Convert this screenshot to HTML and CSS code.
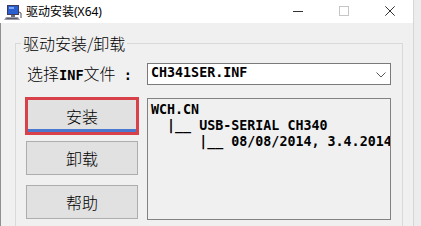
FILE: index.html
```html
<!DOCTYPE html>
<html lang="zh-CN">
<head>
<meta charset="utf-8">
<title>驱动安装(X64)</title>
<link rel="stylesheet" href="styles.css">
</head>
<body>
<div class="window">
  <div class="titlebar">
    <svg class="app-icon" width="18" height="17" viewBox="0 0 18 17">
      <rect x="3" y="1" width="12" height="10" fill="#3a3a5a"/>
      <rect x="4" y="2" width="10" height="8" fill="#2a5fd0"/>
      <rect x="5" y="3" width="5" height="2" fill="#7fa8f0"/>
      <rect x="7" y="11" width="4" height="2" fill="#6b6b80"/>
      <polygon points="2,13 14,13 16,16 0,16" fill="#9a9aa8"/>
      <polygon points="3,14 13,14 14,15 2,15" fill="#5a5a6e"/>
      <path d="M15 8 L17 9 L17 14" stroke="#4a4a60" stroke-width="1" fill="none"/>
    </svg>
    <span class="title">驱动安装(X64)</span>
    <div class="controls">
      <span class="ctl">
        <svg width="10" height="10" viewBox="0 0 10 10"><line x1="0" y1="5.5" x2="10" y2="5.5" stroke="#333" stroke-width="1"/></svg>
      </span>
      <span class="ctl">
        <svg width="10" height="10" viewBox="0 0 10 10"><rect x="0.5" y="0.5" width="9" height="9" fill="none" stroke="#c6c6c6" stroke-width="1"/></svg>
      </span>
      <span class="ctl">
        <svg width="10" height="10" viewBox="0 0 10 10"><path d="M0.3 0.3 L9.7 9.7 M9.7 0.3 L0.3 9.7" stroke="#333" stroke-width="1"/></svg>
      </span>
    </div>
  </div>
  <div class="client">
    <fieldset class="group">
      <legend class="group-title">驱动安装/卸载</legend>
      <div class="row-select">
        <label class="select-label">选择<span class="fx">INF</span>文件<span class="fx"> :</span></label>
        <div class="combo">
          <span class="combo-text">CH341SER.INF</span>
          <svg class="chevron" width="10" height="6" viewBox="0 0 10 6"><path d="M0.5 0.5 L5 5 L9.5 0.5" stroke="#5a5a5a" stroke-width="1" fill="none"/></svg>
        </div>
      </div>
      <div class="row-main">
        <div class="buttons">
          <button class="btn btn-default">安装</button>
          <button class="btn btn-second">卸载</button>
          <button class="btn btn-third">帮助</button>
        </div>
        <pre class="info">WCH.CN
  |__ USB-SERIAL CH340
      |__ 08/08/2014, 3.4.2014</pre>
      </div>
    </fieldset>
  </div>
</div>
</body>
</html>
```

FILE: styles.css
```css
html, body {
  margin: 0;
  padding: 0;
  background: #ececec;
  width: 421px;
  height: 226px;
  overflow: hidden;
}

.window {
  width: 414px;
  height: 226px;
  background: #f0f0f0;
  border-right: 1px solid #d6d6d6;
  box-sizing: border-box;
  font-family: "Noto Sans CJK SC", "Noto Sans", sans-serif;
  font-weight: 300;
  color: #000;
}

.titlebar {
  height: 23px;
  background: #ffffff;
  display: flex;
  align-items: center;
}

.app-icon {
  margin-left: 4px;
  margin-top: 1px;
  flex: none;
}

.title {
  margin-left: 4px;
  font-family: "Noto Sans", "Noto Sans CJK SC", sans-serif;
  font-weight: 400;
  font-size: 12px;
  line-height: 16px;
  color: #000;
}

.controls {
  margin-left: auto;
  display: flex;
  height: 23px;
}

.ctl {
  width: 46px;
  height: 23px;
  display: flex;
  align-items: center;
  justify-content: center;
}

.ctl svg {
  margin-top: -1px;
}

.client {
  height: 203px;
  overflow: hidden;
  border-left: 1px solid #8f8f8f;
  box-sizing: border-box;
}

.group {
  margin: 11px 0 0 14px;
  padding: 0 0 12px 0;
  width: 388px;
  box-sizing: border-box;
  border: 1px solid #d9d9d9;
  min-inline-size: 0;
}

.group-title {
  margin-left: 5px;
  padding: 0 2px;
  font-size: 16px;
  line-height: 18px;
}

.row-select {
  margin-top: 11px;
  display: flex;
  align-items: center;
  height: 22px;
  padding-left: 11px;
}

.select-label {
  width: 120px;
  flex: none;
  font-size: 16px;
  line-height: 20px;
}

.fx {
  font-family: "DejaVu Sans Mono", monospace;
  font-weight: bold;
  font-size: 13.6px;
  white-space: pre;
}

.combo {
  width: 244px;
  height: 22px;
  box-sizing: border-box;
  background: #ffffff;
  border: 1px solid #7a7a7a;
  display: flex;
  align-items: center;
  padding: 0 4px 0 3px;
}

.combo-text {
  font-family: "DejaVu Sans Mono", monospace;
  font-weight: bold;
  font-size: 13.33px;
  line-height: 18px;
  margin-top: -2px;
}

.chevron {
  margin-left: auto;
  margin-top: 1px;
}

.row-main {
  margin-top: 13px;
  display: flex;
  padding-left: 10px;
  gap: 9px;
}

.buttons {
  width: 112px;
  flex: none;
  display: flex;
  flex-direction: column;
}

.btn {
  width: 112px;
  height: 34px;
  box-sizing: border-box;
  background: #e1e1e1;
  border: 1px solid #adadad;
  font-family: "Noto Sans CJK SC", sans-serif;
  font-weight: 300;
  font-size: 16px;
  line-height: 20px;
  color: #000;
  padding: 0;
  margin: 0;
}

.btn-default {
  height: 36px;
  border-color: #0078d7;
  box-shadow: inset 0 -4px 0 #4a78cf;
  outline: 3px solid #d8414a;
  outline-offset: -2px;
}

.btn-second {
  margin-top: 7px;
}

.btn-third {
  margin-top: 10px;
}

.info {
  margin: 0;
  width: 244px;
  height: 122px;
  box-sizing: border-box;
  border: 1px solid #828282;
  background: #f0f0f0;
  padding: 3px 0 0 3px;
  font-family: "DejaVu Sans Mono", monospace;
  font-weight: bold;
  font-size: 13.33px;
  line-height: 16px;
  overflow: hidden;
  white-space: pre;
}
```
